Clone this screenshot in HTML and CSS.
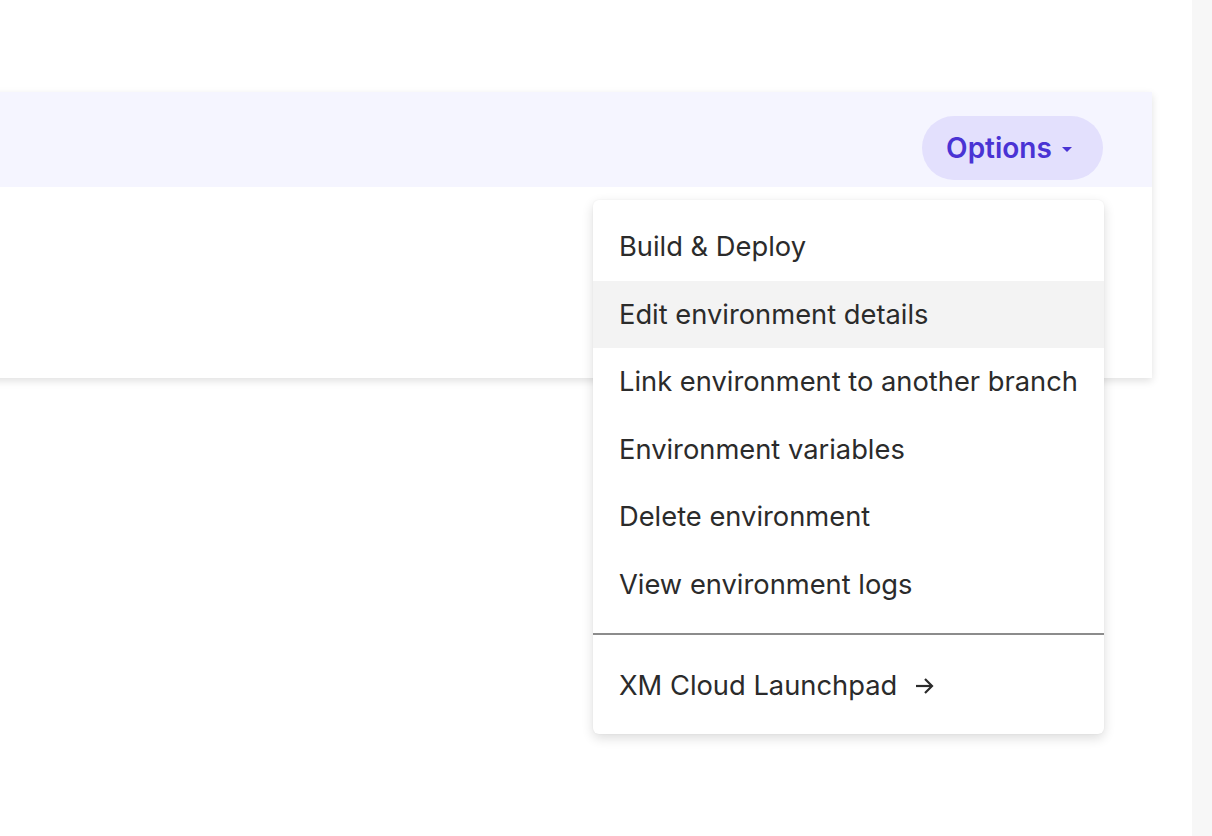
FILE: index.html
```html
<!DOCTYPE html>
<html lang="en">
<head>
<meta charset="utf-8">
<title>Environment options</title>
<link rel="stylesheet" href="styles.css">
</head>
<body>
<div class="page">
  <main class="main">
    <section class="card">
      <header class="card-header">
        <div class="dropdown">
          <button class="options-btn" type="button">Options <span class="caret"></span></button>
          <div class="menu" role="menu">
            <div class="menu-group">
              <div class="menu-item">Build &amp; Deploy</div>
              <div class="menu-item active">Edit environment details</div>
              <div class="menu-item">Link environment to another branch</div>
              <div class="menu-item">Environment variables</div>
              <div class="menu-item">Delete environment</div>
              <div class="menu-item">View environment logs</div>
            </div>
            <hr class="menu-divider">
            <div class="menu-group">
              <div class="menu-item">XM Cloud Launchpad
                <svg class="arrow" width="20" height="18" viewBox="0 0 20 18" fill="none" stroke="#2b2b2b" stroke-width="2.2" stroke-linecap="butt" stroke-linejoin="miter"><path d="M1 9h16"/><path d="M10 2l7 7-7 7"/></svg>
              </div>
            </div>
          </div>
        </div>
      </header>
      <div class="card-body"></div>
    </section>
  </main>
  <aside class="gutter"></aside>
</div>
</body>
</html>
```
FILE: styles.css
```css
html, body {
  margin: 0;
  padding: 0;
  height: 100%;
  background: #ffffff;
  font-family: "Inter", "Noto Sans", "Liberation Sans", sans-serif;
  overflow: hidden;
}

.page {
  display: flex;
  height: 836px;
}

.main {
  flex: 1;
  padding-top: 92px;
  padding-bottom: 20px;
}

.gutter {
  width: 20px;
  background: #f7f7f7;
}

.card {
  margin-left: -24px;
  margin-right: 40px;
  background: #ffffff;
  box-shadow: 0 3px 8px rgba(0, 0, 0, 0.12);
}

.card-header {
  height: 95px;
  box-sizing: border-box;
  background: #f5f5ff;
  display: flex;
  justify-content: flex-end;
  align-items: flex-start;
  padding: 24px 49px 0 0;
}

.card-body {
  height: 191px;
}

.dropdown {
  position: relative;
}

.options-btn {
  height: 64px;
  width: 181px;
  border: none;
  border-radius: 32px;
  background: #e3e0fd;
  color: #4a33d4;
  font-family: inherit;
  font-size: 28px;
  font-weight: 600;
  display: flex;
  align-items: center;
  justify-content: center;
  gap: 10px;
  padding: 0 7px 0 0;
  cursor: pointer;
}

.caret {
  width: 0;
  height: 0;
  border-left: 5px solid transparent;
  border-right: 5px solid transparent;
  border-top: 5px solid #4a33d4;
  margin-top: 3px;
}

.menu {
  position: absolute;
  top: 84px;
  right: -1px;
  width: 511px;
  background: #ffffff;
  border-radius: 6px;
  box-shadow: 0 4px 12px rgba(0, 0, 0, 0.14), 0 0 2px rgba(0, 0, 0, 0.06);
  padding: 13px 0 14px;
  z-index: 10;
}

.menu-item {
  height: 67.5px;
  display: flex;
  align-items: center;
  padding-left: 26px;
  font-size: 27.3px;
  color: #2b2b2b;
  white-space: nowrap;
}

.menu-item.active {
  background: #f3f3f3;
}

.menu-divider {
  border: none;
  border-top: 2px solid #8c8c8c;
  margin: 15px 0 17px;
  height: 0;
}

.arrow {
  margin-left: 18px;
}
```
